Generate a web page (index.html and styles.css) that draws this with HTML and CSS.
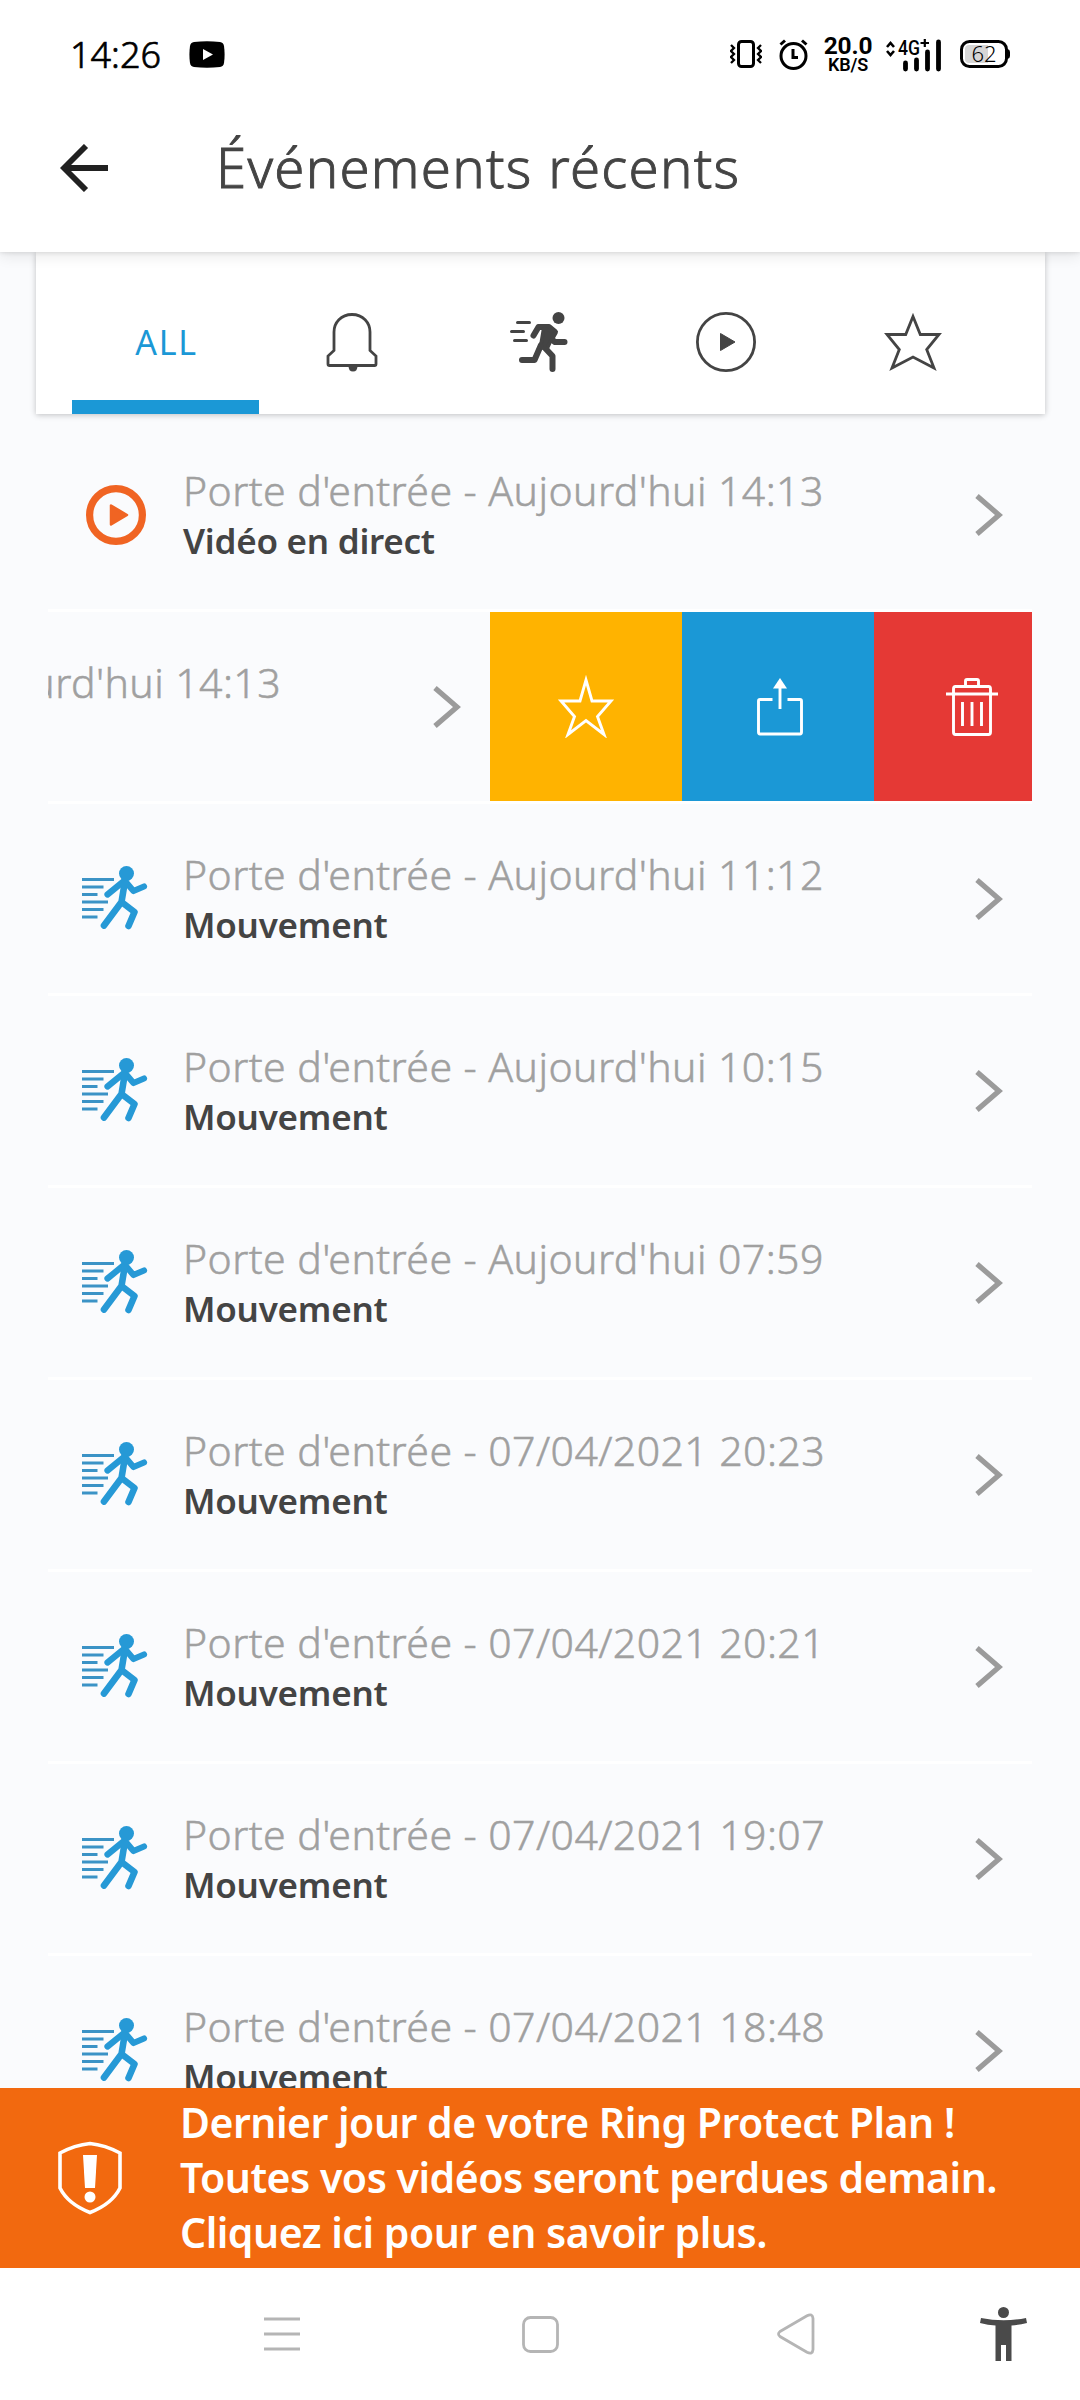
FILE: index.html
```html
<!DOCTYPE html>
<html lang="fr">
<head>
<meta charset="utf-8">
<title>Événements récents</title>
<link rel="stylesheet" href="styles.css">
</head>
<body>
<svg class="defs" aria-hidden="true">
  <symbol id="motion" viewBox="0 0 66 64">
    <g fill="none" stroke="#2699d6" stroke-linecap="round" stroke-linejoin="round">
      <g stroke="#3b93c6" stroke-width="3" stroke-linecap="butt"><path d="M0 13.500H32M0 21H21.500M0 28.500H15.500M0 36H26M0 43.500H21.500M0 51H15.500"/></g>
      <path stroke-width="6.200" d="M42 15L25.500 28.500M43 15L51.500 25L62 20.500"/>
      <path stroke-width="6.600" d="M43 15L39.500 36L22 59.500M39.500 36L52.500 46L46.500 60"/>
    </g>
    <circle cx="44.500" cy="7.500" r="7.500" fill="#2699d6"/>
  </symbol>
  <symbol id="chevron" viewBox="0 0 28 42"><path d="M2 2L24 21L2 40" fill="none" stroke="#9b9b9b" stroke-width="5.200"/></symbol>
</svg>

<header class="top">
  <div class="status">
    <div class="status-left">
      <span class="clock">14:26</span>
      <svg width="36" height="27" viewBox="0 0 36 27"><path d="M5 1Q18-.5 31 1Q34.500 1.500 35 5Q36.200 13.500 35 22Q34.500 25.500 31 26Q18 27.500 5 26Q1.500 25.500 1 22Q-.2 13.500 1 5Q1.500 1.500 5 1Z"/><path d="M14 8L24 13.500L14 19Z" fill="#fff"/></svg>
    </div>
    <div class="status-right">
      <svg width="32" height="30" viewBox="0 0 32 30" fill="none" stroke="#000"><rect x="8.500" y="2.500" width="15" height="25" rx="3" stroke-width="3"/><path stroke-width="2.300" d="M1 6l3 3-3 3 3 3-3 3 3 3-3 3M31 6l-3 3 3 3-3 3 3 3-3 3 3 3"/></svg>
      <svg class="alarm" width="29" height="31" viewBox="0 0 29 31" fill="none" stroke="#000" stroke-width="3"><circle cx="14.500" cy="17" r="12.500"/><path d="M1.500 5.500L6 1.500M27.500 5.500L23 1.500M14 10V18.500H19"/></svg>
      <div class="rate"><b>20.0</b><span>KB/S</span></div>
      <svg class="signal" width="58" height="34" viewBox="0 0 58 34"><path d="M2 9L5.500 5L9 9M2 13L5.500 17L9 13" fill="none" stroke="#000" stroke-width="2.600"/><text x="13" y="17" class="net" textLength="22" lengthAdjust="spacingAndGlyphs">4G</text><path d="M35.500 5H44M39.800 1V9" stroke="#000" stroke-width="2.200"/><path d="M20.500 25V31M31.500 22V31M42.500 14V31M53.500 4V31" stroke="#000" stroke-width="4.800" stroke-linecap="round"/></svg>
      <svg class="battery" width="51" height="30" viewBox="0 0 51 30"><rect x="1.500" y="2.500" width="45" height="25" rx="8" fill="#fff" stroke="#000" stroke-width="3"/><path d="M9 6H28V24H9Q5 24 5 20V10Q5 6 9 6Z" fill="#d6d6d6"/><path d="M47.500 10Q50 10.500 50 13V17Q50 19.500 47.500 20Z"/><text x="24" y="23" class="pct" text-anchor="middle">62</text></svg>
    </div>
  </div>
  <div class="bar">
    <svg width="48" height="48" viewBox="0 0 48 48"><path d="M48 24H6M26 2L4 24L26 46" fill="none" stroke="#212121" stroke-width="5.800"/></svg>
    <h1>Événements récents</h1>
  </div>
</header>

<main class="content">
  <nav class="tabs">
    <div class="tab active"><span>ALL</span></div>
    <div class="tab"><svg width="52" height="60" viewBox="0 0 52 60"><path d="M26 2.500C15 2.500 8 10.500 8 20V38.500L2 44V52Q2 53.500 3.500 53.500H48.500Q50 53.500 50 52V44L44 38.500V20C44 10.500 37 2.500 26 2.500Z" fill="none" stroke="#444" stroke-width="2.800"/><path d="M22.500 54H31.500Q31.500 59.500 27 59.500Q22.500 59.500 22.500 54Z" fill="#444"/></svg></div>
    <div class="tab"><svg width="60" height="60" viewBox="0 0 60 60" fill="none" stroke="#444" stroke-linecap="round" stroke-linejoin="round"><circle cx="49.500" cy="6" r="6" fill="#444" stroke="none"/><path stroke-width="3" d="M8.500 10.500H20.500M2.500 19.500H14.500M5.500 28.500H17.500"/><path stroke-width="6" d="M24.500 23.500L29.500 15H40L46 20L42 27L46 30H55.500M36 36L43.500 44V57M13 48H25.500L32 33"/><path d="M34.500 17L46 19.500L38 37L31.500 35Z" fill="#444" stroke-width="3.500"/></svg></div>
    <div class="tab"><svg width="60" height="60" viewBox="0 0 60 60"><circle cx="30" cy="30" r="28.600" fill="none" stroke="#444" stroke-width="2.800"/><path d="M24.500 21.500V38.500L39 30Z" fill="#444" stroke="#444"/></svg></div>
    <div class="tab"><svg width="60" height="60" viewBox="0 0 60 60"><path d="M30 4.500L37.300 22.500H56L43.700 37.500L51 56L30 45L9 56L16.300 37.500L4 22.500H22.700Z" fill="none" stroke="#444" stroke-width="2.800"/></svg></div>
  </nav>

  <ul class="events">
    <li class="event">
      <svg class="icon live" width="60" height="60" viewBox="0 0 60 60"><circle cx="30" cy="30" r="26.400" fill="none" stroke="#f06423" stroke-width="7.200"/><path d="M25 20.500V39.500L41 30Z" fill="#f06423" stroke="#f06423" stroke-width="2.500" stroke-linejoin="round"/></svg>
      <div class="info"><p class="when">Porte d'entrée - Aujourd'hui 14:13</p><p class="kind">Vidéo en direct</p></div>
      <svg class="chevron" width="28" height="42"><use href="#chevron"/></svg>
    </li>
    <li class="event swiped">
      <p class="when">urd'hui 14:13</p>
      <svg class="chevron" width="28" height="42"><use href="#chevron"/></svg>
      <div class="actions">
        <div class="action favorite"><svg width="60" height="63" viewBox="0 0 60 63"><path d="M30 5L36 26H55L41.500 41.500L48 59.500L30 45.500L12 59.500L18.500 41.500L5 26H24Z" fill="none" stroke="#fff" stroke-width="2.900"/></svg></div>
        <div class="action share"><svg width="46" height="58" viewBox="0 0 46 58" fill="none" stroke="#fff" stroke-width="2.900"><path d="M15.500 21.500H3Q1.500 21.500 1.500 23V54Q1.500 56 3 56H43Q44.500 56 44.500 54V23Q44.500 21.500 43 21.500H30.500M23 31V8"/><path d="M23 0L30 10.500H16Z" fill="#fff" stroke="none"/></svg></div>
        <div class="action delete"><svg width="52" height="58" viewBox="0 0 52 58" fill="none" stroke="#fff" stroke-width="2.900"><path d="M19.500 8V3Q19.500 1.500 21 1.500H31Q32.500 1.500 32.500 3V8M0 16H52M7.500 16V11Q7.500 8.500 9.500 8.500H42.500Q44.500 8.500 44.500 11V54Q44.500 56.500 42.500 56.500H9.500Q7.500 56.500 7.500 54V16M16.500 24V48M26 24V48M35.500 24V48"/></svg></div>
      </div>
    </li>
    <li class="event">
      <svg class="icon" width="66" height="64"><use href="#motion"/></svg>
      <div class="info"><p class="when">Porte d'entrée - Aujourd'hui 11:12</p><p class="kind">Mouvement</p></div>
      <svg class="chevron" width="28" height="42"><use href="#chevron"/></svg>
    </li>
    <li class="event">
      <svg class="icon" width="66" height="64"><use href="#motion"/></svg>
      <div class="info"><p class="when">Porte d'entrée - Aujourd'hui 10:15</p><p class="kind">Mouvement</p></div>
      <svg class="chevron" width="28" height="42"><use href="#chevron"/></svg>
    </li>
    <li class="event">
      <svg class="icon" width="66" height="64"><use href="#motion"/></svg>
      <div class="info"><p class="when">Porte d'entrée - Aujourd'hui 07:59</p><p class="kind">Mouvement</p></div>
      <svg class="chevron" width="28" height="42"><use href="#chevron"/></svg>
    </li>
    <li class="event">
      <svg class="icon" width="66" height="64"><use href="#motion"/></svg>
      <div class="info"><p class="when">Porte d'entrée - 07/04/2021 20:23</p><p class="kind">Mouvement</p></div>
      <svg class="chevron" width="28" height="42"><use href="#chevron"/></svg>
    </li>
    <li class="event">
      <svg class="icon" width="66" height="64"><use href="#motion"/></svg>
      <div class="info"><p class="when">Porte d'entrée - 07/04/2021 20:21</p><p class="kind">Mouvement</p></div>
      <svg class="chevron" width="28" height="42"><use href="#chevron"/></svg>
    </li>
    <li class="event">
      <svg class="icon" width="66" height="64"><use href="#motion"/></svg>
      <div class="info"><p class="when">Porte d'entrée - 07/04/2021 19:07</p><p class="kind">Mouvement</p></div>
      <svg class="chevron" width="28" height="42"><use href="#chevron"/></svg>
    </li>
    <li class="event">
      <svg class="icon" width="66" height="64"><use href="#motion"/></svg>
      <div class="info"><p class="when">Porte d'entrée - 07/04/2021 18:48</p><p class="kind">Mouvement</p></div>
      <svg class="chevron" width="28" height="42"><use href="#chevron"/></svg>
    </li>
  </ul>
</main>

<aside class="banner">
  <svg width="64" height="74" viewBox="0 0 64 74"><path d="M32 2.500Q47 4 62 12V47Q54 63 32 71.500Q10 63 2 47V12Q17 4 32 2.500Z" fill="none" stroke="#fff" stroke-width="3.600"/><path d="M25 14H39L37 47H27Z" fill="#fff"/><circle cx="32" cy="56" r="5.500" fill="#fff"/></svg>
  <p>Dernier jour de votre Ring Protect Plan !<br>Toutes vos vidéos seront perdues demain.<br>Cliquez ici pour en savoir plus.</p>
</aside>

<footer class="navbar">
  <svg width="36" height="36" viewBox="0 0 36 36"><path d="M0 3H36M0 18H36M0 33H36" stroke="#b5b5b5" stroke-width="3"/></svg>
  <svg width="37" height="37" viewBox="0 0 37 37"><rect x="1.500" y="1.500" width="34" height="34" rx="7" fill="none" stroke="#b5b5b5" stroke-width="2.800"/></svg>
  <svg width="38" height="42" viewBox="0 0 38 42"><path d="M3 18.500L30 2.800Q35.500 0 36 5.500V36.500Q35.500 42 30 39.200L3 23.500Q0 21 3 18.500Z" fill="none" stroke="#b5b5b5" stroke-width="2.800"/></svg>
  <svg width="47" height="56" viewBox="0 0 47 56" fill="#4a4a4a"><circle cx="23.500" cy="6.500" r="5.500"/><path d="M1 12Q23.500 16.500 46 12L47 17Q39 19 31.500 19.500V55H26V39H21V55H15.500V19.500Q8 19 0 17Z"/></svg>
</footer>
</body>
</html>
```
FILE: styles.css
```css
* { box-sizing: border-box; margin: 0; padding: 0; }

body {
  width: 1080px;
  height: 2400px;
  display: flex;
  flex-direction: column;
  overflow: hidden;
  background: #fafbfd;
  color: #444;
  font-family: "Noto Sans", "Open Sans", sans-serif;
  white-space: nowrap;
}

svg { display: block; flex: none; }
.defs { display: none; }

/* Status bar and title */
.top {
  position: relative;
  z-index: 2;
  flex: none;
  height: 252px;
  background: #fff;
  box-shadow: 0 0 5px rgba(0, 0, 0, .14), 0 4px 14px rgba(0, 0, 0, .09);
}
.status {
  display: flex;
  justify-content: space-between;
  align-items: center;
  height: 108px;
  padding: 0 69px 0 70px;
  color: #000;
}
.status-left, .status-right { display: flex; align-items: center; }
.status-left { gap: 27px; }
.clock { width: 92px; font-size: 36px; font-weight: 300; -webkit-text-stroke: .7px; }
.alarm { margin-left: 17px; }
.rate {
  width: 48px;
  margin: 0 0 0 16px;
  display: flex;
  flex-direction: column;
  align-items: center;
  font-family: Roboto, sans-serif;
}
.rate b { font-size: 24.500px; line-height: 21px; font-weight: 700; letter-spacing: -.2px; }
.rate span { font-size: 18px; line-height: 18px; font-weight: 600; letter-spacing: -.2px; }
.signal { margin: 2px 0 0 13px; }
.net { font: 500 20px Roboto, sans-serif; }
.battery { margin-left: 17px; }
.pct { font: 300 22px "Noto Sans", sans-serif; }

.bar { display: flex; align-items: center; height: 120px; padding-left: 60px; gap: 108px; }
.bar h1 {
  margin-top: -3px;
  font-size: 54.500px;
  line-height: 70px;
  font-weight: 300;
  letter-spacing: 1.300px;
  -webkit-text-stroke: .9px;
}

/* Filter tabs */
.content { flex: none; height: 1836px; overflow: hidden; }
.tabs {
  display: flex;
  width: 1009px;
  height: 162px;
  margin-left: 36px;
  padding: 0 37px 0 36px;
  background: #fff;
  box-shadow: 0 1px 6px rgba(0, 0, 0, .24);
}
.tab {
  flex: 1;
  display: flex;
  justify-content: center;
  align-items: center;
  padding: 18px 2px 0 0;
}
.active {
  padding: 31px 0 0 2px;
  border-bottom: 14px solid #1b98d6;
  color: #1b98d6;
  font-size: 34px;
  letter-spacing: 1.800px;
}

/* Event list */
.events { list-style: none; width: 984px; margin: 6px 0 0 48px; overflow: hidden; }
.event {
  display: flex;
  height: 192px;
  padding: 41px 29px 0 34px;
  border-bottom: 3px solid #fff;
}
.icon { margin: 21px 0 0; }
.live { margin: 24px 2px 0 4px; }
.info { margin: 1px 0 0 35px; }
.when {
  color: #a0a0a0;
  font-size: 41px;
  line-height: 56px;
  font-weight: 300;
  letter-spacing: .42px;
  -webkit-text-stroke: .5px;
}
.kind {
  margin-top: 1px;
  font-size: 35px;
  line-height: 44px;
  font-weight: 600;
  letter-spacing: -.25px;
}
.chevron { margin: 33px 0 0 auto; }

/* Row dragged to the left, with its actions in view */
.swiped { padding: 0; justify-content: flex-end; }
.swiped .when { margin: 42px 152px 0 0; }
.swiped .chevron { margin: 74px 29px 0 0; }
.actions { display: flex; flex: none; width: 542px; overflow: hidden; }
.action { flex: none; width: 192px; display: flex; justify-content: center; align-items: center; }
.favorite { background: #ffb300; }
.share { background: #1b98d6; padding-left: 3px; }
.delete { background: #e53935; padding-left: 3px; }

/* Plan banner */
.banner {
  flex: none;
  display: flex;
  height: 180px;
  padding: 5px 0 0 58px;
  background: #f2690f;
  color: #fff;
}
.banner svg { margin-top: 48px; }
.banner p {
  margin: 2px 0 0 58px;
  font-size: 41px;
  line-height: 55px;
  font-weight: 570;
  letter-spacing: -.500px;
}

/* System navigation */
.navbar {
  flex: 1;
  display: flex;
  align-items: center;
  padding-left: 264px;
  background: #fff;
}
.navbar svg:nth-child(2) { margin-left: 222px; }
.navbar svg:nth-child(3) { margin-left: 218px; }
.navbar svg:nth-child(4) { margin-left: 165px; }
```
